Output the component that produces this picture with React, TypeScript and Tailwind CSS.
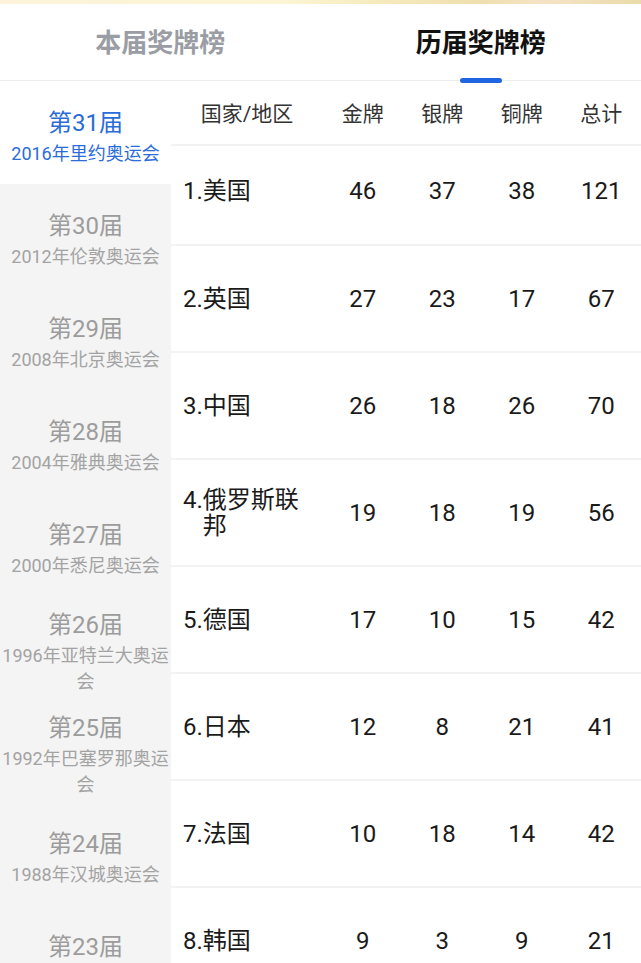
import React from "react";

const font = {
  fontFamily: 'Roboto, "Noto Sans CJK SC", "Noto Sans", sans-serif',
};

const editions = [
  ["第31届", "2016年里约奥运会"],
  ["第30届", "2012年伦敦奥运会"],
  ["第29届", "2008年北京奥运会"],
  ["第28届", "2004年雅典奥运会"],
  ["第27届", "2000年悉尼奥运会"],
  ["第26届", "1996年亚特兰大奥运会"],
  ["第25届", "1992年巴塞罗那奥运会"],
  ["第24届", "1988年汉城奥运会"],
  ["第23届", "1984年洛杉矶奥运会"],
];

const rows: [string, string, number, number, number, number][] = [
  ["1.", "美国", 46, 37, 38, 121],
  ["2.", "英国", 27, 23, 17, 67],
  ["3.", "中国", 26, 18, 26, 70],
  ["4.", "俄罗斯联邦", 19, 18, 19, 56],
  ["5.", "德国", 17, 10, 15, 42],
  ["6.", "日本", 12, 8, 21, 41],
  ["7.", "法国", 10, 18, 14, 42],
  ["8.", "韩国", 9, 3, 9, 21],
];

export default function App() {
  return (
    <div
      className="w-[641px] h-[963px] overflow-hidden bg-white flex flex-col"
      style={font}
    >
      <div className="h-[4px] shrink-0 bg-[linear-gradient(90deg,#fcf3da_0%,#fcf5d3_45%,#f5e9bd_60%,#efdfb0_75%,#f6e3c6_85%,#eadbab_100%)]" />
      <div className="h-[77px] shrink-0 flex border-b border-[#eeeeee] relative pt-[2px]">
        <div className="flex-1 flex items-center justify-center text-[26px] font-bold text-[#9a9da3]">
          本届奖牌榜
        </div>
        <div className="flex-1 flex items-center justify-center text-[26px] font-bold text-[#111111] relative">
          历届奖牌榜
          <div className="absolute bottom-[-3px] left-1/2 -translate-x-1/2 w-[42px] h-[5px] rounded-full bg-[#1f66e0]" />
        </div>
      </div>
      <div className="flex flex-1 min-h-0">
        <div className="w-[171px] shrink-0 bg-[#f4f4f4] flex flex-col">
          {editions.map(([t, s], i) => (
            <div
              key={t}
              className={`h-[103px] shrink-0 flex flex-col items-center justify-center pt-[7px] text-center ${
                i === 0 ? "bg-white" : ""
              }`}
            >
              <div
                className={`text-[24px] leading-[36px] ${
                  i === 0 ? "text-[#2b6cd9]" : "text-[#9c9c9c]"
                }`}
              >
                {t}
              </div>
              <div
                className={`text-[18px] leading-[26px] ${
                  i === 0 ? "text-[#2b6cd9]" : "text-[#a3a3a3]"
                }`}
              >
                {s}
              </div>
            </div>
          ))}
        </div>
        <div className="flex-1 flex flex-col min-w-0">
          <div className="h-[65px] shrink-0 grid grid-cols-[152px_1fr_1fr_1fr_1fr] items-center border-b-2 border-[#f3f3f3] text-[21px] text-[#333333] text-center pt-[4px]">
            <div>国家/地区</div>
            <div>金牌</div>
            <div>银牌</div>
            <div>铜牌</div>
            <div>总计</div>
          </div>
          {rows.map(([n, name, g, s, b, t], i) => (
            <div
              key={name}
              className={`shrink-0 grid grid-cols-[152px_1fr_1fr_1fr_1fr] items-center border-b-2 border-[#f3f3f3] text-[24px] leading-[26px] text-[#1a1a1a] ${
                i === 0 ? "h-[100px] pb-[8px]" : "h-[107px]"
              }`}
            >
              <div className="flex pl-[12px] pr-[16px]">
                <span>{n}</span>
                <span className="flex-1 min-w-0">{name}</span>
              </div>
              <div className="text-center">{g}</div>
              <div className="text-center">{s}</div>
              <div className="text-center">{b}</div>
              <div className="text-center">{t}</div>
            </div>
          ))}
        </div>
      </div>
    </div>
  );
}
